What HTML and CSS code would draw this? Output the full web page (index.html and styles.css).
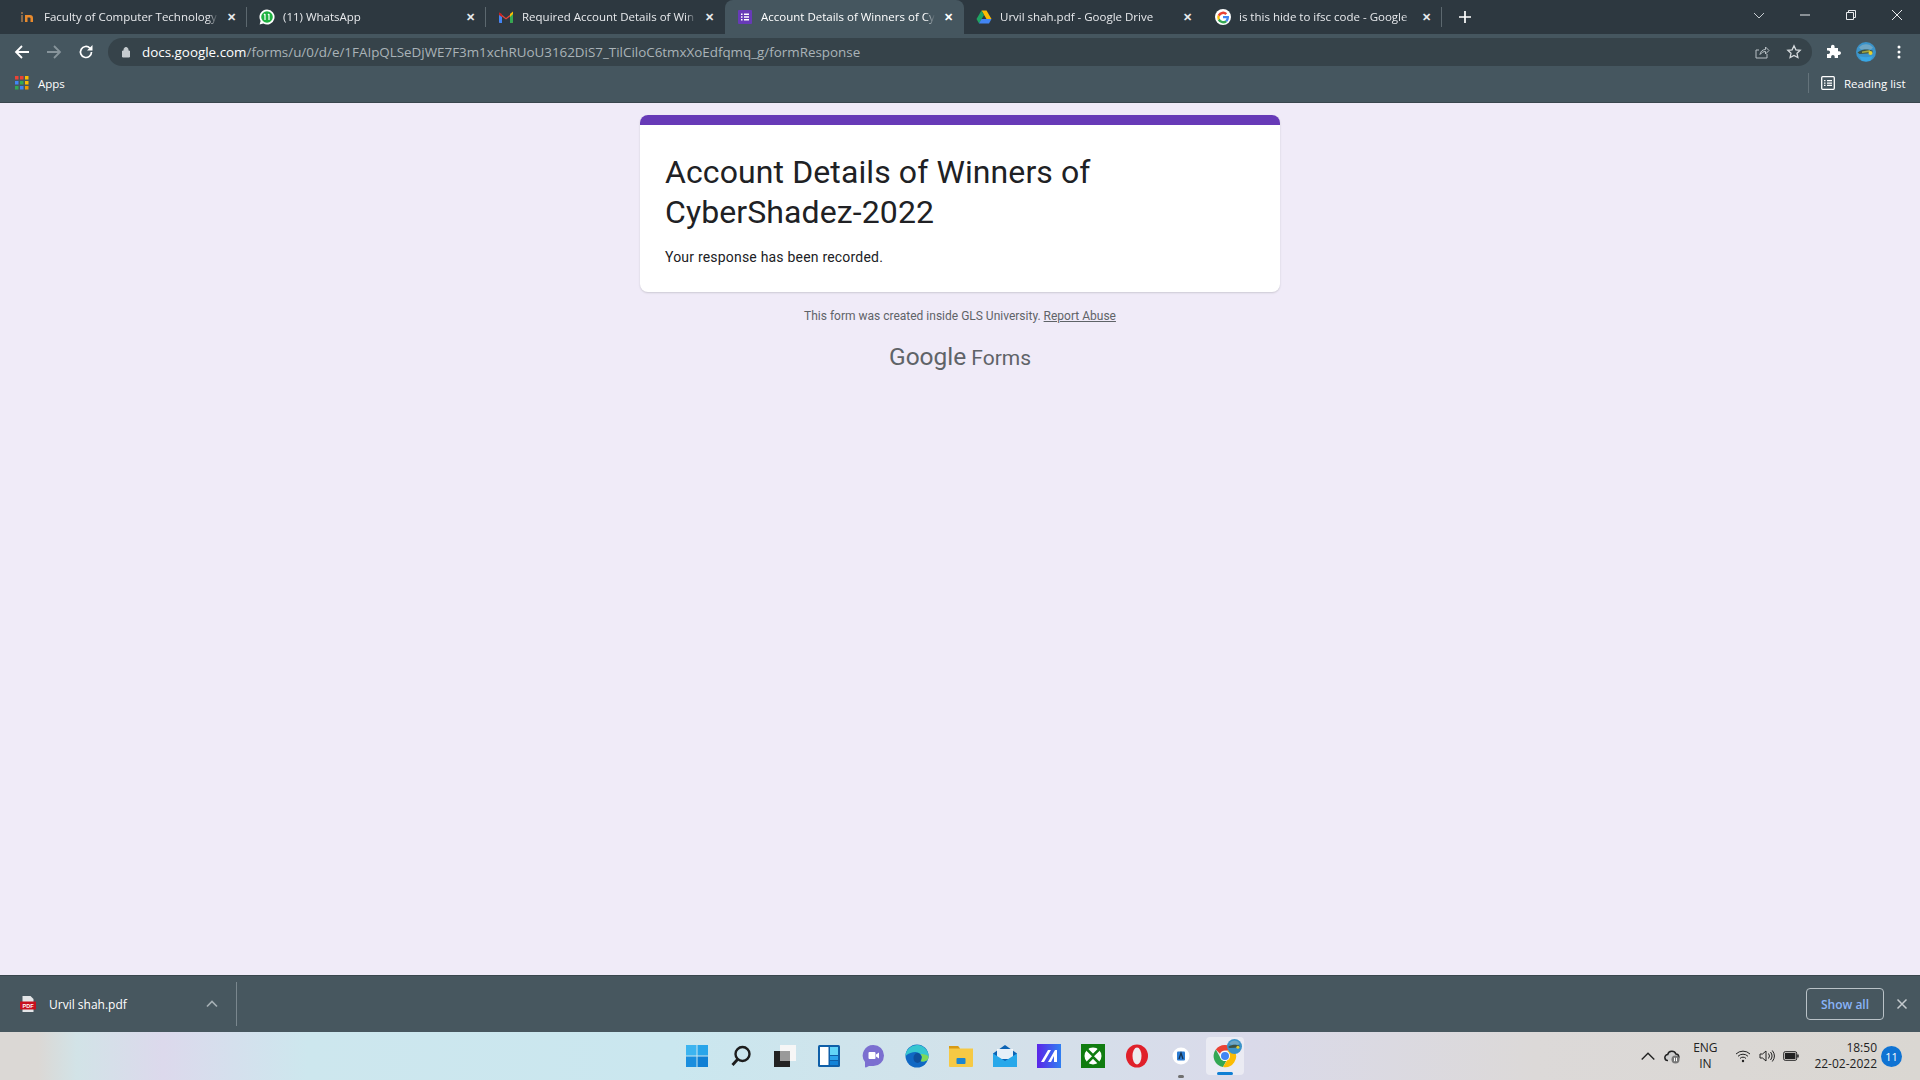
FILE: index.html
```html
<!DOCTYPE html>
<html lang="en">

<head>
    <meta charset="UTF-8">
    <title>Account Details of Winners of CyberShadez-2022</title>
    <link rel="stylesheet" href="styles.css">
</head>

<body>
    <div class="tabstrip">
        <div class="tab">
            <svg class="favicon" viewBox="0 0 16 16"><rect x="1" y="6" width="2" height="7" fill="#8a6a4a"/><rect x="1" y="3" width="2" height="2" fill="#8a6a4a"/><path d="M5 13V6h5a3 3 0 0 1 3 3v4h-2.500V9.500A1 1 0 0 0 9.500 8.500H7.500V13z" fill="#e98a2c"/></svg>
            <span class="tab-title">Faculty of Computer Technology</span>
            <span class="tab-close">✕</span>
        </div>
        <div class="tab">
            <svg class="favicon" viewBox="0 0 16 16"><path d="M8 .5a7.500 7.500 0 0 0-6.400 11.400L.6 15.500l3.700-1A7.500 7.500 0 1 0 8 .5z" fill="#fff"/><circle cx="8" cy="8" r="5.800" fill="#1fb141"/><path d="M6 5v6M5 6l1-1M10 5v6M9 6l1-1" stroke="#fff" stroke-width="1.200" fill="none"/></svg>
            <span class="tab-title">(11) WhatsApp</span>
            <span class="tab-close">✕</span>
        </div>
        <div class="tab">
            <svg class="favicon" viewBox="0 0 16 16"><path d="M1 3.500 8 9l7-5.500V13a1 1 0 0 1-1 1h-2V7.500L8 10.500 4 7.500V14H2a1 1 0 0 1-1-1z" fill="#ea4335"/><path d="M1 3.500V7l3 2.500V5z" fill="#c5221f"/><path d="M12 5v9h2a1 1 0 0 0 1-1V3.500z" fill="#34a853"/><path d="M1 13a1 1 0 0 0 1 1h2V8L1 6z" fill="#4285f4"/><path d="M12 5l3-2.500V5l-3 3z" fill="#fbbc04"/></svg>
            <span class="tab-title">Required Account Details of Win</span>
            <span class="tab-close">✕</span>
        </div>
        <div class="tab tab-active">
            <svg class="favicon" viewBox="0 0 16 16"><rect x="1" y="1" width="14" height="14" rx="1" fill="#673ab7"/><path d="M4 4.500h1.500V6H4zM7 4.500h5V6H7zM4 7.300h1.500v1.500H4zM7 7.300h5v1.500H7zM4 10h1.500v1.500H4zM7 10h5v1.500H7z" fill="#fff"/></svg>
            <span class="tab-title">Account Details of Winners of Cy</span>
            <span class="tab-close">✕</span>
        </div>
        <div class="tab">
            <svg class="favicon" viewBox="0 0 16 16"><path d="M5.500 1.500h5L15.500 10h-5z" fill="#fbbc04"/><path d="M5.500 1.500 .5 10 3 14.500 8 6z" fill="#1fa463"/><path d="M3 14.500h10l2.500-4.500h-10z" fill="#4285f4"/></svg>
            <span class="tab-title">Urvil shah.pdf - Google Drive</span>
            <span class="tab-close">✕</span>
        </div>
        <div class="tab">
            <svg class="favicon" viewBox="0 0 16 16"><circle cx="8" cy="8" r="8" fill="#fff"/><path d="M8 7v2.300h3.600a3.400 3.400 0 0 1-1.500 2.100l2 1.500A6 6 0 0 0 14 8.600c0-.6 0-1.100-.1-1.600z" fill="#4285f4"/><path d="M10.100 11.400A3.500 3.500 0 0 1 4.800 9.600l-2 1.600A6 6 0 0 0 12.100 12.900z" fill="#34a853"/><path d="M4.800 9.600a3.500 3.500 0 0 1 0-2.200l-2-1.600a6 6 0 0 0 0 5.400z" fill="#fbbc04"/><path d="M4.800 7.400a3.500 3.500 0 0 1 5.600-1.400l1.800-1.800A6 6 0 0 0 2.800 5.800z" fill="#ea4335"/></svg>
            <span class="tab-title">is this hide to ifsc code - Google</span>
            <span class="tab-close">✕</span>
        </div>
        <svg class="newtab" viewBox="0 0 14 14"><path d="M7 1v12M1 7h12" stroke="#fff" stroke-width="1.700"/></svg>
        <div class="winctrl">
            <svg viewBox="0 0 12 12"><path d="M1 4l5 5 5-5" stroke="#c8ced2" stroke-width="1" fill="none"/></svg>
            <svg viewBox="0 0 12 12"><path d="M1 6h10" stroke="#e8eaed" stroke-width="1"/></svg>
            <svg viewBox="0 0 12 12"><path d="M1.500 3.500h7v7h-7zM3.500 3.500v-2h7v7h-2" stroke="#e8eaed" stroke-width="1" fill="none"/></svg>
            <svg viewBox="0 0 12 12"><path d="M1 1l10 10M11 1 1 11" stroke="#e8eaed" stroke-width="1"/></svg>
        </div>
    </div>

    <div class="toolbar">
        <svg class="nav-icon" viewBox="0 0 16 16"><path d="M15 8H2.500M8 2 2 8l6 6" stroke="#fff" stroke-width="1.800" fill="none"/></svg>
        <svg class="nav-icon" viewBox="0 0 16 16"><path d="M1 8h12.500M8 2l6 6-6 6" stroke="#87949b" stroke-width="1.800" fill="none"/></svg>
        <svg class="nav-icon" viewBox="0 0 16 16"><path d="M13.500 8a5.500 5.500 0 1 1-1.600-3.900" stroke="#fff" stroke-width="1.700" fill="none"/><path d="M14.500 1v5.500H9z" fill="#fff"/></svg>
        <div class="omnibox">
            <svg class="lock" viewBox="0 0 12 12"><path d="M2.500 5h7v6h-7zM4 5V3.500a2 2 0 0 1 4 0V5" fill="#c5cbcf" stroke="#c5cbcf"/></svg>
            <span class="url"><span class="url-host">docs.google.com</span>/forms/u/0/d/e/1FAIpQLSeDjWE7F3m1xchRUoU3162DiS7_TilCiloC6tmxXoEdfqmq_g/formResponse</span>
            <svg class="omni-icon" viewBox="0 0 16 16"><path d="M13 10v4H2V6h3M6 10.500c.4-3 2.500-5 5.500-5V3l3.500 3.500L11.500 10V7.500c-2 0-4 1-5.500 3z" stroke="#b8c0c5" fill="none"/></svg>
            <svg class="omni-icon" viewBox="0 0 16 16"><path d="M8 1.800l1.900 4 4.300.5-3.200 3 .9 4.300L8 11.400l-3.900 2.200.9-4.300-3.200-3 4.300-.5z" stroke="#d5dadd" stroke-width="1.300" fill="none"/></svg>
        </div>
        <svg class="ext-icon" viewBox="0 0 16 16"><path d="M6 2.500a1.800 1.800 0 0 1 3.600 0V4h3.400v3.300h1.200a1.800 1.800 0 0 1 0 3.600H13V14H9.700v-1.200a1.800 1.800 0 0 0-3.600 0V14H2v-4h1.300a1.800 1.800 0 0 0 0-3.600H2V4h4z" fill="#fff"/></svg>
        <svg class="avatar" viewBox="0 0 20 20"><circle cx="10" cy="10" r="10" fill="#3b93c9"/><path d="M3 5.500a9 9 0 0 1 14 0l-2 2H5z" fill="#6fa6c4"/><path d="M1.500 10.500c3-2.500 6-3 10-3l5 1v2.500l-6 .5-7 .5z" fill="#3f5140"/><path d="M6 9.500l8-1.500v2l-8 1z" fill="#a3a53e"/><circle cx="14.500" cy="11" r="2" fill="#e6cf2e"/><path d="M3 14c4 1.500 10 1.500 14 0l-3 5H6z" fill="#39a7e4"/></svg>
        <svg class="menu-icon" viewBox="0 0 4 16"><circle cx="2" cy="3" r="1.500" fill="#fff"/><circle cx="2" cy="8" r="1.500" fill="#fff"/><circle cx="2" cy="13" r="1.500" fill="#fff"/></svg>
    </div>

    <div class="bookmarks">
        <svg class="apps-icon" viewBox="0 0 14 14"><path d="M0 0h3.500v3.500H0z" fill="#ea4335"/><path d="M5 0h3.500v3.500H5z" fill="#ea4335"/><path d="M10 0h3.500v3.500H10z" fill="#fbbc04"/><path d="M0 5h3.500v3.500H0z" fill="#4285f4"/><path d="M5 5h3.500v3.500H5z" fill="#34a853"/><path d="M10 5h3.500v3.500H10z" fill="#fbbc04"/><path d="M0 10h3.500v3.500H0z" fill="#34a853"/><path d="M5 10h3.500v3.500H5z" fill="#4285f4"/><path d="M10 10h3.500v3.500H10z" fill="#f29900"/></svg>
        <span class="apps-label">Apps</span>
        <div class="reading">
            <svg class="reading-icon" viewBox="0 0 14 14"><rect x=".7" y=".7" width="12.600" height="12.600" rx="1" stroke="#fff" stroke-width="1.300" fill="none"/><path d="M3 4h1.500v1.300H3zM6 4h5v1.300H6zM3 6.400h1.500v1.300H3zM6 6.400h5v1.300H6zM3 8.800h1.500v1.300H3zM6 8.800h5v1.300H6z" fill="#fff"/></svg>
            <span>Reading list</span>
        </div>
    </div>

    <main class="page">
        <div class="card">
            <div class="card-top"></div>
            <div class="card-body">
                <h1>Account Details of Winners of CyberShadez-2022</h1>
                <p>Your response has been recorded.</p>
            </div>
        </div>
        <div class="note">This form was created inside GLS University. <a href="#">Report Abuse</a></div>
        <div class="forms-logo"><span class="logo-google">Google</span><span class="logo-forms">Forms</span></div>
    </main>

    <div class="downloads">
        <div class="dl-item">
            <svg class="pdf-icon" viewBox="0 0 16 16"><path d="M2.500 0h8l3 3v13h-11z" fill="#e4e6e8"/><rect y="5.500" width="16" height="8" rx=".5" fill="#c8101e"/><text x="8" y="12" class="pdf-label">PDF</text></svg>
            <span class="dl-name">Urvil shah.pdf</span>
            <svg class="dl-caret" viewBox="0 0 12 8"><path d="M1 6.500l5-5 5 5" stroke="#a5afb4" stroke-width="1.700" fill="none"/></svg>
        </div>
        <button class="show-all">Show all</button>
        <svg class="dl-close" viewBox="0 0 12 12"><path d="M1.500 1.500l9 9M10.500 1.500l-9 9" stroke="#c4cace" stroke-width="1.500"/></svg>
    </div>

    <div class="taskbar">
        <div></div>
        <div class="task-icons">
            <div class="task"><svg viewBox="0 0 24 24"><path d="M1 1h10.500v10.500H1z" fill="#3cb4f0"/><path d="M12.500 1H23v10.500H12.500z" fill="#28a5ea"/><path d="M1 12.500h10.500V23H1z" fill="#1a8ede"/><path d="M12.500 12.500H23V23H12.500z" fill="#0f7fd4"/></svg></div>
            <div class="task"><svg viewBox="0 0 24 24"><circle cx="13.500" cy="10" r="7" stroke="#1d1d1d" stroke-width="2.400" fill="none"/><path d="M8.500 15.500 3.500 21" stroke="#1d1d1d" stroke-width="2.800"/></svg></div>
            <div class="task"><svg viewBox="0 0 24 24"><rect x="7" y="1" width="16" height="16" fill="#f6f6f6"/><rect x="1" y="7" width="16" height="16" fill="#222"/><rect x="7" y="7" width="10" height="10" fill="#9a9a9a"/></svg></div>
            <div class="task"><svg viewBox="0 0 24 24"><rect x="1" y="1" width="22" height="22" rx="1.500" fill="#0f5fa8"/><rect x="3" y="3" width="8.500" height="18" fill="#fff"/><rect x="13" y="3" width="8" height="8" fill="#62d5f8"/><rect x="13" y="12" width="8" height="4" fill="#2aa4ec"/><rect x="13" y="17" width="8" height="4" fill="#1283d8"/></svg></div>
            <div class="task"><svg viewBox="0 0 24 24"><path d="M12.500 1a10.500 10.500 0 0 1 0 21H8l-3 1.500c-.7.200-1-.2-1-.8V18A10.500 10.500 0 0 1 12.500 1z" fill="#7b6fd0"/><rect x="7.500" y="8" width="7" height="7" rx="1" fill="#fff"/><path d="M15 10.500l3-2v6l-3-2z" fill="#fff"/></svg></div>
            <div class="task"><svg viewBox="0 0 24 24"><circle cx="12" cy="12" r="11.500" fill="#1068c4"/><path d="M.5 12A11.500 11.500 0 0 1 23.500 13c0 3-3 4.500-5.500 4.500s-4-1-4-2c2 0 3-1 3-2.500S14 8 10.500 8 4 9 .5 12z" fill="#37c6d0"/><path d="M23.500 13c0 3-3 4.500-5.500 4.500-1.500 0-3-.5-3.500-1.500 3-.5 3-4 1-6 3 0 8 1 8 3z" fill="#7ed957"/><ellipse cx="12.500" cy="14" rx="4" ry="5" fill="#0e4f9c"/></svg></div>
            <div class="task"><svg viewBox="0 0 24 24"><path d="M0 2h9l2 2.500h13V22a1 1 0 0 1-1 1H1a1 1 0 0 1-1-1z" fill="#f6c944"/><path d="M0 2h9l2 2.500H0z" fill="#d89a14"/><rect x="7.500" y="14" width="9" height="6" rx="1" fill="#1b86d0"/></svg></div>
            <div class="task"><svg viewBox="0 0 24 24"><path d="M0 9.500 12 1l12 8.500V23H0z" fill="#0c63b4"/><path d="M4 5h16v10H4z" fill="#fff" opacity=".9"/><path d="M0 9.500 12 17l12-7.500V23H0z" fill="#28a8ea"/></svg></div>
            <div class="task"><svg viewBox="0 0 24 24"><defs><linearGradient id="ma" x1="0" x2="1"><stop offset="0" stop-color="#5b25e8"/><stop offset="1" stop-color="#2f7ff2"/></linearGradient></defs><rect width="24" height="24" fill="url(#ma)"/><path d="M4 18 11 6h3L7 18zM11 18 18 6h2v12h-3v-6l-3 6z" fill="#fff"/></svg></div>
            <div class="task"><svg viewBox="0 0 24 24"><rect width="24" height="24" fill="#107c10"/><circle cx="12" cy="12" r="8.500" fill="#fff"/><path d="M6 5.500l6 6 6-6M6 19l6-6 6 6" stroke="#107c10" stroke-width="2.500" fill="none"/></svg></div>
            <div class="task"><svg viewBox="0 0 24 24"><ellipse cx="12" cy="12" rx="11" ry="11.500" fill="#e0202a"/><ellipse cx="12" cy="12" rx="4.500" ry="8.500" fill="#edeaee"/></svg></div>
            <div class="task task-running"><svg viewBox="0 0 24 24"><circle cx="12" cy="12" r="8.500" fill="#fff"/><rect x="8" y="7.500" width="8" height="9" rx="1" fill="#2b7cd3"/><path d="M10 15l2-6 2 6" stroke="#16324f" stroke-width="1.300" fill="none"/></svg></div>
            <div class="task task-chrome">
                <svg viewBox="0 0 24 24"><path d="M12 1a11 11 0 0 1 9.500 5.500H12a5.500 5.500 0 0 0-5 3.200L2.800 5.500A11 11 0 0 1 12 1z" fill="#ea4335"/><path d="M2.800 5.500 7.500 14a5.500 5.500 0 0 0 5.700 3L10 23A11 11 0 0 1 2.800 5.500z" fill="#34a853"/><path d="M21.500 6.500A11 11 0 0 1 10 23l5-8.500a5.500 5.500 0 0 0-1-8z" fill="#fbbc04"/><circle cx="12" cy="12" r="5" fill="#fff"/><circle cx="12" cy="12" r="4" fill="#4285f4"/></svg>
                <svg class="chrome-avatar" viewBox="0 0 20 20"><circle cx="10" cy="10" r="10" fill="#3b93c9"/><path d="M3 5.500a9 9 0 0 1 14 0l-2 2H5z" fill="#6fa6c4"/><path d="M1.500 10.500c3-2.500 6-3 10-3l5 1v2.500l-6 .5-7 .5z" fill="#3f5140"/><circle cx="14.500" cy="11" r="2" fill="#e6cf2e"/></svg>
            </div>
        </div>
        <div class="tray">
            <svg class="tray-icon" viewBox="0 0 14 14"><path d="M1.500 10 7 4.500l5.500 5.500" stroke="#222" stroke-width="1.200" fill="none"/></svg>
            <svg class="tray-icon" viewBox="0 0 16 16"><path d="M4 12.500a3 3 0 0 1-.3-6 4.300 4.300 0 0 1 8.200-.5 3 3 0 0 1 1 5.800" stroke="#222" stroke-width="1.500" fill="#cfcfcf"/><circle cx="11.500" cy="11.500" r="4" fill="#777"/><path d="M10.500 9.800v3.400M12.500 9.800v3.400" stroke="#fff"/></svg>
            <div class="lang">ENG<br>IN</div>
            <svg class="tray-icon" viewBox="0 0 16 16"><path d="M1 6a10 10 0 0 1 14 0M3 8.300a7 7 0 0 1 10 0M5 10.500a4 4 0 0 1 6 0" stroke="#222" fill="none"/><circle cx="8" cy="13" r="1.200" fill="#222"/></svg>
            <svg class="tray-icon" viewBox="0 0 16 16"><path d="M1 6v4h2.500L7 13V3L3.500 6z" stroke="#222" fill="none"/><path d="M9.500 5.500a4 4 0 0 1 0 5M11.500 4a6.500 6.500 0 0 1 0 8M13.300 2.500a9 9 0 0 1 0 11" stroke="#222" fill="none"/></svg>
            <svg class="tray-icon" viewBox="0 0 16 16"><rect x=".7" y="3.700" width="13" height="8.600" rx="1.500" stroke="#222" fill="none"/><rect x="2" y="5" width="10.400" height="6" fill="#222"/><rect x="14.200" y="6.500" width="1.500" height="3" fill="#222"/></svg>
            <div class="clock">18:50<br>22-02-2022</div>
            <span class="notif">11</span>
        </div>
    </div>
</body>

</html>
```

FILE: styles.css
```css
* {
    box-sizing: border-box;
    margin: 0;
    padding: 0;
}

body {
    height: 1080px;
    display: flex;
    flex-direction: column;
    overflow: hidden;
    font-family: "Open Sans", Roboto, sans-serif;
    background-color: #f0ebf8;
}

svg {
    display: block;
    flex-shrink: 0;
}

/* tabs */
.tabstrip {
    height: 34px;
    display: flex;
    align-items: flex-end;
    padding-left: 8px;
    background-color: #2d3840;
}

.tab {
    width: 239px;
    height: 34px;
    display: flex;
    align-items: center;
    padding: 0 7px 1px 12px;
    color: #e8eaed;
    font-size: 11.5px;
    position: relative;
}

.tab::after {
    content: "";
    position: absolute;
    right: 0;
    top: 7px;
    height: 20px;
    width: 1px;
    background-color: #5c686f;
}

.tab-active {
    background-color: #45565f;
    border-radius: 8px 8px 0 0;
    color: #fff;
}

.tab-active::after,
.tab:nth-child(3)::after,
.tab:nth-child(5)::after {
    display: none;
}

.favicon {
    width: 16px;
    height: 16px;
    margin-right: 8px;
}

.tab-title {
    flex: 1;
    overflow: hidden;
    white-space: nowrap;
    mask-image: linear-gradient(90deg, #000 calc(100% - 10px), transparent);
}

.tab-close {
    width: 16px;
    margin-left: 5px;
    margin-right: 1px;
    text-align: center;
    font-size: 11px;
    font-weight: 700;
}

.newtab {
    width: 14px;
    height: 14px;
    margin: 0 0 10px 16px;
}

.winctrl {
    margin-left: auto;
    display: flex;
    align-items: center;
    gap: 34px;
    height: 34px;
    padding: 0 17px 5px 0;
}

.winctrl svg {
    width: 12px;
    height: 12px;
}

/* toolbar */
.toolbar {
    height: 35px;
    display: flex;
    align-items: center;
    padding-left: 14px;
    background-color: #45565f;
}

.nav-icon {
    width: 16px;
    height: 16px;
    margin-right: 16px;
}

.omnibox {
    width: 1704px;
    height: 28px;
    margin-left: -2px;
    display: flex;
    align-items: center;
    padding: 0 10px 0 12px;
    border-radius: 14px;
    background-color: #36434a;
    font-size: 13.4px;
    color: #aab3b8;
}

.lock {
    width: 12px;
    height: 12px;
    margin-right: 10px;
}

.url {
    flex: 1;
    white-space: nowrap;
}

.url-host {
    color: #fff;
}

.omni-icon {
    width: 16px;
    height: 16px;
    margin-left: 16px;
}

.ext-icon {
    width: 16px;
    height: 16px;
    margin-left: 13px;
}

.avatar {
    width: 20px;
    height: 20px;
    margin-left: 15px;
}

.menu-icon {
    width: 4px;
    height: 16px;
    margin-left: 21px;
}

/* bookmarks bar */
.bookmarks {
    height: 33px;
    display: flex;
    align-items: center;
    padding: 0 1px 5px 15px;
    color: #fff;
    font-size: 11.5px;
    background-color: #45565f;
}

.apps-icon {
    width: 14px;
    height: 14px;
    margin-right: 9px;
}

.reading {
    margin-left: auto;
    width: 111px;
    height: 20px;
    display: flex;
    align-items: center;
    padding-left: 12px;
    border-left: 1px solid #64737b;
}

.reading-icon {
    width: 14px;
    height: 14px;
    margin-right: 9px;
}

/* page */
.page {
    flex: 1;
    border-top: 1px solid #39464d;
    padding-top: 12px;
}

.card {
    width: 640px;
    margin: 0 auto;
    background-color: #fff;
    border-radius: 8px;
    overflow: hidden;
    box-shadow: 0 1px 2px rgba(60, 64, 67, 0.2);
}

.card-top {
    height: 10px;
    background-color: #673ab7;
}

.card-body {
    padding: 27px 25px 25px;
}

h1 {
    font-family: Roboto, sans-serif;
    font-size: 32px;
    font-weight: 400;
    line-height: 40px;
    letter-spacing: 0.1px;
    color: #202124;
}

.card-body p {
    margin-top: 15px;
    font-family: Roboto, sans-serif;
    font-size: 14px;
    line-height: 20px;
    letter-spacing: 0.2px;
    color: #202124;
}

.note {
    margin-top: 16px;
    text-align: center;
    font-family: Roboto, sans-serif;
    font-size: 12px;
    line-height: 16px;
    color: #5f6368;
}

.note a {
    color: #5f6368;
}

.forms-logo {
    margin-top: 17px;
    display: flex;
    justify-content: center;
    align-items: baseline;
    gap: 5px;
    font-family: Roboto, sans-serif;
    line-height: 32px;
    color: #5f6368;
}

.logo-google {
    font-size: 24.5px;
    font-weight: 400;
}

.logo-forms {
    font-size: 21px;
}

/* download shelf */
.downloads {
    height: 57px;
    display: flex;
    align-items: center;
    border-top: 1px solid #39464d;
    background-color: #47575f;
    color: #fff;
    font-size: 12px;
}

.dl-item {
    width: 237px;
    height: 44px;
    display: flex;
    align-items: center;
    padding-left: 20px;
    border-right: 1px solid #7a878e;
}

.pdf-icon {
    width: 16px;
    height: 16px;
    margin-right: 13px;
}

.pdf-label {
    font-family: "Liberation Sans", sans-serif;
    font-size: 5.500px;
    font-weight: 700;
    fill: #fff;
    text-anchor: middle;
}

.dl-name {
    flex: 1;
}

.dl-caret {
    width: 12px;
    height: 8px;
    margin-right: 18px;
}

.show-all {
    margin-left: auto;
    width: 78px;
    height: 32px;
    border: 1px solid #b9c2c7;
    border-radius: 4px;
    background: none;
    color: #8ab4f8;
    font-family: "Open Sans", Roboto, sans-serif;
    font-size: 12px;
    font-weight: 600;
}

.dl-close {
    width: 12px;
    height: 12px;
    margin: 0 12px 0 12px;
}

/* windows taskbar */
.taskbar {
    height: 48px;
    display: grid;
    grid-template-columns: 1fr auto 1fr;
    align-items: center;
    background: linear-gradient(90deg, #dbd8d5 0%, #dbd8d5 2%, #d2e3e7 4%, #dcd9ec 8.500%, #cde7ee 16%, #cae7ef 35%, #d2e2ea 50%, #dadaea 65%, #dcd9d8 80%, #dad7d2 100%);
}

.task-icons {
    display: flex;
    align-items: center;
    padding-left: 2px;
}

.task {
    width: 44px;
    height: 48px;
    display: flex;
    align-items: center;
    justify-content: center;
    position: relative;
}

.task svg {
    width: 24px;
    height: 24px;
}

.task-running::after,
.task-chrome::after {
    content: "";
    position: absolute;
    left: 19px;
    bottom: 2px;
    width: 6px;
    height: 3px;
    border-radius: 2px;
    background-color: #707070;
}

.task-chrome {
    width: 38px;
    height: 38px;
    margin: 0 3px;
    background-color: rgba(255, 255, 255, 0.45);
    border-radius: 4px;
}

.task-chrome::after {
    left: 11px;
    bottom: 0;
    width: 16px;
    background-color: #0f7fd4;
}

.task svg.chrome-avatar {
    position: absolute;
    right: 2px;
    top: 2px;
    width: 15px;
    height: 15px;
}

.tray {
    display: flex;
    align-items: center;
    justify-content: flex-end;
    padding-right: 18px;
    font-family: "Open Sans", Roboto, sans-serif;
    font-size: 12px;
    line-height: 16px;
    color: #222;
}

.tray-icon {
    width: 16px;
    height: 16px;
    margin-right: 8px;
}

.lang {
    width: 34px;
    margin: 0 13px 0 0;
    text-align: center;
}

.clock {
    margin-left: 7px;
    text-align: right;
}

.notif {
    width: 21px;
    height: 21px;
    margin-left: 4px;
    border-radius: 50%;
    background-color: #0f73d3;
    color: #fff;
    font-size: 11px;
    line-height: 21px;
    text-align: center;
}
```
